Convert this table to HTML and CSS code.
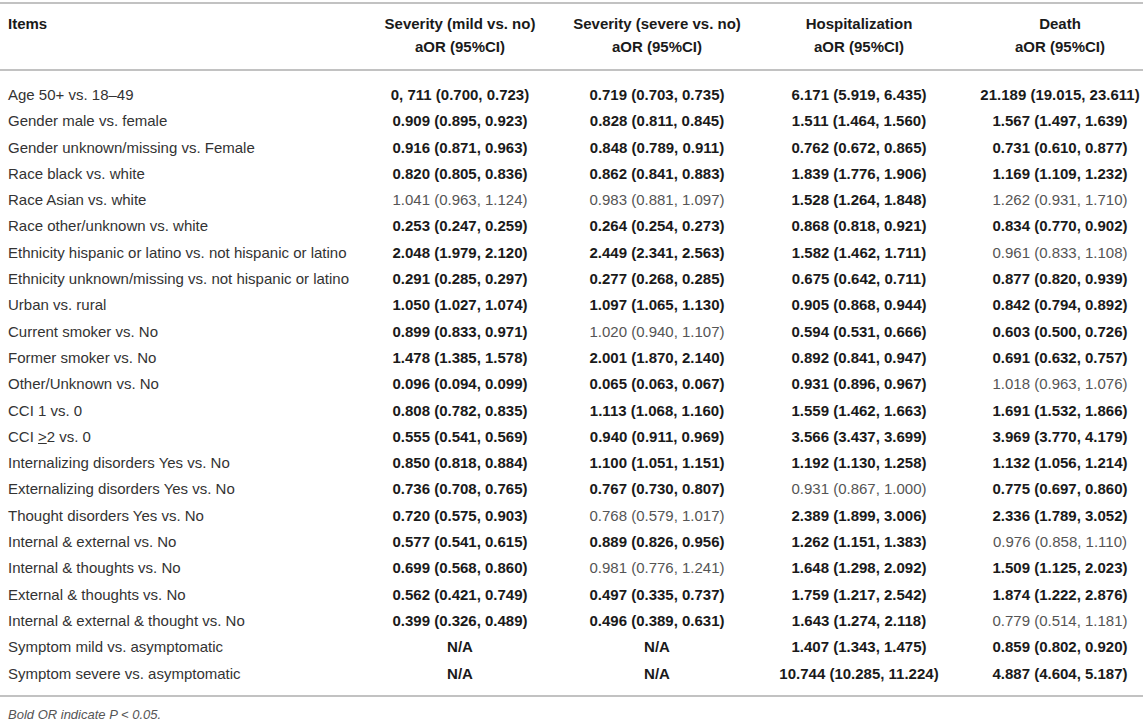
FILE: index.html
```html
<!DOCTYPE html>
<html>
<head>
  <title>Adjusted odds ratios</title>
  <meta charset="UTF-8">
  <link rel="stylesheet" href="styles.css">
</head>
<body>
  <table class="results">
    <colgroup>
      <col class="col-items">
      <col class="col-mild">
      <col class="col-severe">
      <col class="col-hosp">
      <col class="col-death">
    </colgroup>
    <thead>
      <tr>
        <th class="items">Items</th>
        <th>Severity (mild vs. no)<br>aOR (95%CI)</th>
        <th>Severity (severe vs. no)<br>aOR (95%CI)</th>
        <th>Hospitalization<br>aOR (95%CI)</th>
        <th class="last">Death<br>aOR (95%CI)</th>
      </tr>
    </thead>
    <tbody>
      <tr><td class="items">Age 50+ vs. 18–49</td><td class="sig">0, 711 (0.700, 0.723)</td><td class="sig">0.719 (0.703, 0.735)</td><td class="sig">6.171 (5.919, 6.435)</td><td class="sig last">21.189 (19.015, 23.611)</td></tr>
      <tr><td class="items">Gender male vs. female</td><td class="sig">0.909 (0.895, 0.923)</td><td class="sig">0.828 (0.811, 0.845)</td><td class="sig">1.511 (1.464, 1.560)</td><td class="sig last">1.567 (1.497, 1.639)</td></tr>
      <tr><td class="items">Gender unknown/missing vs. Female</td><td class="sig">0.916 (0.871, 0.963)</td><td class="sig">0.848 (0.789, 0.911)</td><td class="sig">0.762 (0.672, 0.865)</td><td class="sig last">0.731 (0.610, 0.877)</td></tr>
      <tr><td class="items">Race black vs. white</td><td class="sig">0.820 (0.805, 0.836)</td><td class="sig">0.862 (0.841, 0.883)</td><td class="sig">1.839 (1.776, 1.906)</td><td class="sig last">1.169 (1.109, 1.232)</td></tr>
      <tr><td class="items">Race Asian vs. white</td><td>1.041 (0.963, 1.124)</td><td>0.983 (0.881, 1.097)</td><td class="sig">1.528 (1.264, 1.848)</td><td class="last">1.262 (0.931, 1.710)</td></tr>
      <tr><td class="items">Race other/unknown vs. white</td><td class="sig">0.253 (0.247, 0.259)</td><td class="sig">0.264 (0.254, 0.273)</td><td class="sig">0.868 (0.818, 0.921)</td><td class="sig last">0.834 (0.770, 0.902)</td></tr>
      <tr><td class="items">Ethnicity hispanic or latino vs. not hispanic or latino</td><td class="sig">2.048 (1.979, 2.120)</td><td class="sig">2.449 (2.341, 2.563)</td><td class="sig">1.582 (1.462, 1.711)</td><td class="last">0.961 (0.833, 1.108)</td></tr>
      <tr><td class="items">Ethnicity unknown/missing vs. not hispanic or latino</td><td class="sig">0.291 (0.285, 0.297)</td><td class="sig">0.277 (0.268, 0.285)</td><td class="sig">0.675 (0.642, 0.711)</td><td class="sig last">0.877 (0.820, 0.939)</td></tr>
      <tr><td class="items">Urban vs. rural</td><td class="sig">1.050 (1.027, 1.074)</td><td class="sig">1.097 (1.065, 1.130)</td><td class="sig">0.905 (0.868, 0.944)</td><td class="sig last">0.842 (0.794, 0.892)</td></tr>
      <tr><td class="items">Current smoker vs. No</td><td class="sig">0.899 (0.833, 0.971)</td><td>1.020 (0.940, 1.107)</td><td class="sig">0.594 (0.531, 0.666)</td><td class="sig last">0.603 (0.500, 0.726)</td></tr>
      <tr><td class="items">Former smoker vs. No</td><td class="sig">1.478 (1.385, 1.578)</td><td class="sig">2.001 (1.870, 2.140)</td><td class="sig">0.892 (0.841, 0.947)</td><td class="sig last">0.691 (0.632, 0.757)</td></tr>
      <tr><td class="items">Other/Unknown vs. No</td><td class="sig">0.096 (0.094, 0.099)</td><td class="sig">0.065 (0.063, 0.067)</td><td class="sig">0.931 (0.896, 0.967)</td><td class="last">1.018 (0.963, 1.076)</td></tr>
      <tr><td class="items">CCI 1 vs. 0</td><td class="sig">0.808 (0.782, 0.835)</td><td class="sig">1.113 (1.068, 1.160)</td><td class="sig">1.559 (1.462, 1.663)</td><td class="sig last">1.691 (1.532, 1.866)</td></tr>
      <tr><td class="items">CCI <u>&gt;</u>2 vs. 0</td><td class="sig">0.555 (0.541, 0.569)</td><td class="sig">0.940 (0.911, 0.969)</td><td class="sig">3.566 (3.437, 3.699)</td><td class="sig last">3.969 (3.770, 4.179)</td></tr>
      <tr><td class="items">Internalizing disorders Yes vs. No</td><td class="sig">0.850 (0.818, 0.884)</td><td class="sig">1.100 (1.051, 1.151)</td><td class="sig">1.192 (1.130, 1.258)</td><td class="sig last">1.132 (1.056, 1.214)</td></tr>
      <tr><td class="items">Externalizing disorders Yes vs. No</td><td class="sig">0.736 (0.708, 0.765)</td><td class="sig">0.767 (0.730, 0.807)</td><td>0.931 (0.867, 1.000)</td><td class="sig last">0.775 (0.697, 0.860)</td></tr>
      <tr><td class="items">Thought disorders Yes vs. No</td><td class="sig">0.720 (0.575, 0.903)</td><td>0.768 (0.579, 1.017)</td><td class="sig">2.389 (1.899, 3.006)</td><td class="sig last">2.336 (1.789, 3.052)</td></tr>
      <tr><td class="items">Internal &amp; external vs. No</td><td class="sig">0.577 (0.541, 0.615)</td><td class="sig">0.889 (0.826, 0.956)</td><td class="sig">1.262 (1.151, 1.383)</td><td class="last">0.976 (0.858, 1.110)</td></tr>
      <tr><td class="items">Internal &amp; thoughts vs. No</td><td class="sig">0.699 (0.568, 0.860)</td><td>0.981 (0.776, 1.241)</td><td class="sig">1.648 (1.298, 2.092)</td><td class="sig last">1.509 (1.125, 2.023)</td></tr>
      <tr><td class="items">External &amp; thoughts vs. No</td><td class="sig">0.562 (0.421, 0.749)</td><td class="sig">0.497 (0.335, 0.737)</td><td class="sig">1.759 (1.217, 2.542)</td><td class="sig last">1.874 (1.222, 2.876)</td></tr>
      <tr><td class="items">Internal &amp; external &amp; thought vs. No</td><td class="sig">0.399 (0.326, 0.489)</td><td class="sig">0.496 (0.389, 0.631)</td><td class="sig">1.643 (1.274, 2.118)</td><td class="last">0.779 (0.514, 1.181)</td></tr>
      <tr><td class="items">Symptom mild vs. asymptomatic</td><td class="sig">N/A</td><td class="sig">N/A</td><td class="sig">1.407 (1.343, 1.475)</td><td class="sig last">0.859 (0.802, 0.920)</td></tr>
      <tr><td class="items">Symptom severe vs. asymptomatic</td><td class="sig">N/A</td><td class="sig">N/A</td><td class="sig">10.744 (10.285, 11.224)</td><td class="sig last">4.887 (4.604, 5.187)</td></tr>
    </tbody>
  </table>
  <p class="note">Bold OR indicate P &lt; 0.05.</p>
</body>
</html>
```

FILE: styles.css
```css
body {
  font-family: "Liberation Sans", Arial, Helvetica, sans-serif;
  margin: 0;
  padding: 0;
  background-color: #ffffff;
  color: #333333;
}
.results {
  width: 1143px;
  margin-top: 2px;
  border-collapse: collapse;
  table-layout: fixed;
  font-size: 15px;
}
.col-items {
  width: 362px;
}
.col-mild {
  width: 196px;
}
.col-severe {
  width: 198px;
}
.col-hosp {
  width: 206px;
}
.col-death {
  width: 181px;
}
.results thead tr {
  border-top: 2px solid #c2c2c2;
  border-bottom: 2px solid #c2c2c2;
}
.results th {
  padding: 8px 0 11px 0;
  line-height: 23px;
  font-weight: bold;
  color: #1a1a1a;
  text-align: center;
  vertical-align: top;
  white-space: nowrap;
}
.results th.items {
  text-align: left;
  padding-left: 8px;
}
.results td {
  padding: 0;
  line-height: 26.3px;
  text-align: center;
  color: #555555;
  white-space: nowrap;
}
.results td.items {
  text-align: left;
  padding-left: 8px;
  color: #333333;
}
.results td.sig {
  font-weight: bold;
  color: #1a1a1a;
}
.results .last {
  padding-left: 15px;
}
.results tbody tr:first-child td {
  padding-top: 11px;
}
.results tbody tr:last-child td {
  padding-bottom: 8px;
}
.results tbody tr:last-child {
  border-bottom: 2px solid #c2c2c2;
}
.note {
  margin: 10px 0 0 8px;
  font-size: 13px;
  line-height: 16px;
  font-style: italic;
  color: #555555;
}
```
